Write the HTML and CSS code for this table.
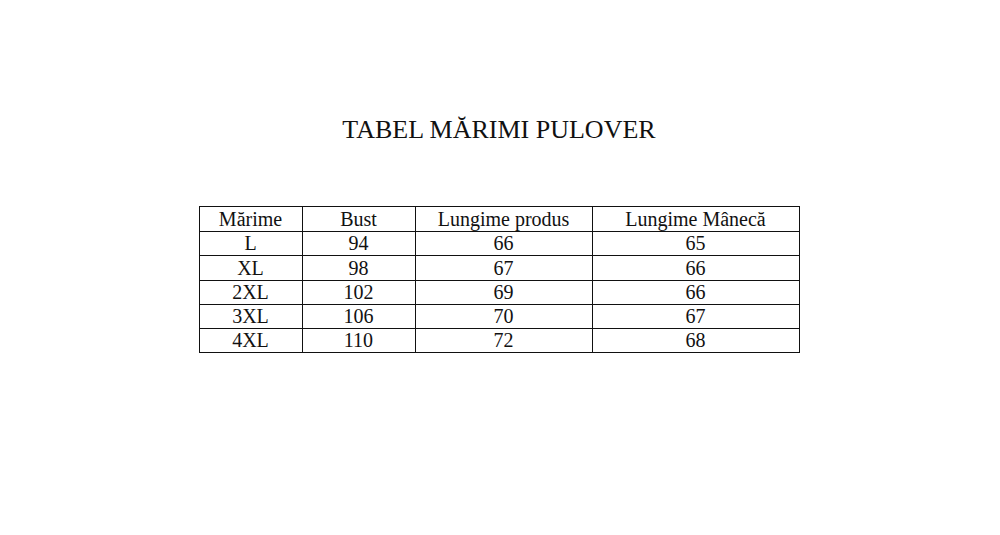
FILE: index.html
```html
<!DOCTYPE html>
<html lang="ro">
<head>
<meta charset="utf-8">
<title>Tabel mărimi pulover</title>
<link rel="stylesheet" href="styles.css">
</head>
<body>
<main class="page">
  <h1 class="title">TABEL MĂRIMI PULOVER</h1>
  <table class="sizes">
    <colgroup>
      <col class="c1"><col class="c2"><col class="c3"><col class="c4">
    </colgroup>
    <thead>
      <tr class="head"><th>Mărime</th><th>Bust</th><th>Lungime produs</th><th>Lungime Mânecă</th></tr>
    </thead>
    <tbody>
      <tr><td>L</td><td>94</td><td>66</td><td>65</td></tr>
      <tr class="tall"><td>XL</td><td>98</td><td>67</td><td>66</td></tr>
      <tr><td>2XL</td><td>102</td><td>69</td><td>66</td></tr>
      <tr><td>3XL</td><td>106</td><td>70</td><td>67</td></tr>
      <tr><td>4XL</td><td>110</td><td>72</td><td>68</td></tr>
    </tbody>
  </table>
</main>
</body>
</html>
```
FILE: styles.css
```css
html, body {
  margin: 0;
  padding: 0;
  background: #ffffff;
}
body {
  width: 1000px;
  height: 535px;
  font-family: "Liberation Serif", "Times New Roman", serif;
  color: #111111;
}
.page {
  display: flex;
  flex-direction: column;
  align-items: center;
  padding-top: 114px;
}
.title {
  margin: 0 0 0 -2px;
  font-size: 26px;
  font-weight: normal;
  line-height: 32px;
}
.sizes {
  margin-top: 60px;
  margin-left: -2px;
  border-collapse: collapse;
  table-layout: fixed;
  width: 601px;
  font-size: 20px;
}
.c1 { width: 103px; }
.c2 { width: 113px; }
.c3 { width: 177px; }
.c4 { width: 207px; }
.sizes th,
.sizes td {
  border: 1px solid #111111;
  padding: 0;
  text-align: center;
  font-weight: normal;
  height: 23px;
  line-height: 23px;
  vertical-align: middle;
}
.head th {
  height: 24px;
}
.tall td {
  height: 24px;
}
```
